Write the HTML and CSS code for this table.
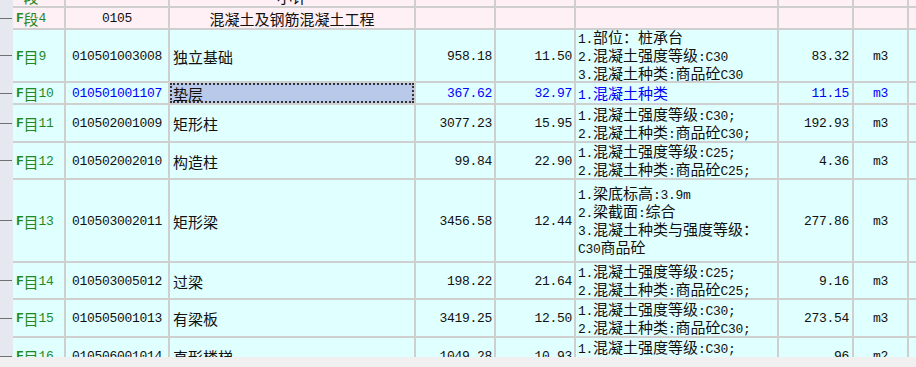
FILE: index.html
```html
<!DOCTYPE html>
<html lang="zh">
<head>
<meta charset="utf-8">
<title>清单</title>
<link rel="stylesheet" href="styles.css">
</head>
<body>
<div class="view">
  <div class="tree">
    <div class="t22"></div>
    <div class="t22"></div>
    <div class="t53"></div>
    <div class="t22"></div>
    <div class="t38"></div>
    <div class="t37"></div>
    <div class="t83"></div>
    <div class="t37"></div>
    <div class="t38"></div>
    <div class="t38"></div>
  </div>
  <div class="grid">
    <div class="row pink">
      <div class="c lbl"><span class="a f">F</span>段<span class="a">3</span></div>
      <div class="c code a"></div>
      <div class="c name center">小计</div>
      <div class="c num a">35523.55</div>
      <div class="c num a"></div>
      <div class="c desc"></div>
      <div class="c qty a"></div>
      <div class="c unit a"></div>
      <div class="c"></div>
    </div>
    <div class="row pink">
      <div class="c lbl"><span class="a f">F</span>段<span class="a">4</span></div>
      <div class="c code a">0105</div>
      <div class="c name center">混凝土及钢筋混凝土工程</div>
      <div class="c num a"></div>
      <div class="c num a"></div>
      <div class="c desc"></div>
      <div class="c qty a"></div>
      <div class="c unit a"></div>
      <div class="c"></div>
    </div>
    <div class="row cyan">
      <div class="c lbl"><span class="a f">F</span>目<span class="a">9</span></div>
      <div class="c code a">010501003008</div>
      <div class="c name">独立基础</div>
      <div class="c num a">958.18</div>
      <div class="c num a">11.50</div>
      <div class="c desc"><div><span class="a">1.</span>部位：桩承台<br><span class="a">2.</span>混凝土强度等级<span class="a">:C30</span><br><span class="a">3.</span>混凝土种类<span class="a">:</span>商品砼<span class="a">C30</span></div></div>
      <div class="c qty a">83.32</div>
      <div class="c unit a">m3</div>
      <div class="c"></div>
    </div>
    <div class="row cyan sel">
      <div class="c lbl"><span class="a f">F</span>目<span class="a">10</span></div>
      <div class="c code a">010501001107</div>
      <div class="c name focus">垫层</div>
      <div class="c num a">367.62</div>
      <div class="c num a">32.97</div>
      <div class="c desc"><div><span class="a">1.</span>混凝土种类</div></div>
      <div class="c qty a">11.15</div>
      <div class="c unit a">m3</div>
      <div class="c"></div>
    </div>
    <div class="row cyan">
      <div class="c lbl"><span class="a f">F</span>目<span class="a">11</span></div>
      <div class="c code a">010502001009</div>
      <div class="c name">矩形柱</div>
      <div class="c num a">3077.23</div>
      <div class="c num a">15.95</div>
      <div class="c desc"><div><span class="a">1.</span>混凝土强度等级<span class="a">:C30;</span><br><span class="a">2.</span>混凝土种类<span class="a">:</span>商品砼<span class="a">C30;</span></div></div>
      <div class="c qty a">192.93</div>
      <div class="c unit a">m3</div>
      <div class="c"></div>
    </div>
    <div class="row cyan">
      <div class="c lbl"><span class="a f">F</span>目<span class="a">12</span></div>
      <div class="c code a">010502002010</div>
      <div class="c name">构造柱</div>
      <div class="c num a">99.84</div>
      <div class="c num a">22.90</div>
      <div class="c desc"><div><span class="a">1.</span>混凝土强度等级<span class="a">:C25;</span><br><span class="a">2.</span>混凝土种类<span class="a">:</span>商品砼<span class="a">C25;</span></div></div>
      <div class="c qty a">4.36</div>
      <div class="c unit a">m3</div>
      <div class="c"></div>
    </div>
    <div class="row cyan">
      <div class="c lbl"><span class="a f">F</span>目<span class="a">13</span></div>
      <div class="c code a">010503002011</div>
      <div class="c name">矩形梁</div>
      <div class="c num a">3456.58</div>
      <div class="c num a">12.44</div>
      <div class="c desc"><div><span class="a">1.</span>梁底标高<span class="a">:3.9m</span><br><span class="a">2.</span>梁截面<span class="a">:</span>综合<br><span class="a">3.</span>混凝土种类与强度等级：<br><span class="a">C30</span>商品砼</div></div>
      <div class="c qty a">277.86</div>
      <div class="c unit a">m3</div>
      <div class="c"></div>
    </div>
    <div class="row cyan">
      <div class="c lbl"><span class="a f">F</span>目<span class="a">14</span></div>
      <div class="c code a">010503005012</div>
      <div class="c name">过梁</div>
      <div class="c num a">198.22</div>
      <div class="c num a">21.64</div>
      <div class="c desc"><div><span class="a">1.</span>混凝土强度等级<span class="a">:C25;</span><br><span class="a">2.</span>混凝土种类<span class="a">:</span>商品砼<span class="a">C25;</span></div></div>
      <div class="c qty a">9.16</div>
      <div class="c unit a">m3</div>
      <div class="c"></div>
    </div>
    <div class="row cyan">
      <div class="c lbl"><span class="a f">F</span>目<span class="a">15</span></div>
      <div class="c code a">010505001013</div>
      <div class="c name">有梁板</div>
      <div class="c num a">3419.25</div>
      <div class="c num a">12.50</div>
      <div class="c desc"><div><span class="a">1.</span>混凝土强度等级<span class="a">:C30;</span><br><span class="a">2.</span>混凝土种类<span class="a">:</span>商品砼<span class="a">C30;</span></div></div>
      <div class="c qty a">273.54</div>
      <div class="c unit a">m3</div>
      <div class="c"></div>
    </div>
    <div class="row cyan">
      <div class="c lbl"><span class="a f">F</span>目<span class="a">16</span></div>
      <div class="c code a">010506001014</div>
      <div class="c name">直形楼梯</div>
      <div class="c num a">1049.28</div>
      <div class="c num a">10.93</div>
      <div class="c desc"><div><span class="a">1.</span>混凝土强度等级<span class="a">:C30;</span><br><span class="a">2.</span>混凝土种类<span class="a">:</span>商品砼<span class="a">C30;</span></div></div>
      <div class="c qty a">96</div>
      <div class="c unit a">m2</div>
      <div class="c"></div>
    </div>
  </div>
</div>
<div class="hscroll"></div>
</body>
</html>
```

FILE: styles.css
```css
* { box-sizing: border-box; margin: 0; padding: 0; }
html, body { width: 916px; height: 367px; overflow: hidden; }
body {
  background: #f0f0f0;
  font-family: "Noto Sans CJK SC", sans-serif;
  font-size: 15px;
  color: #111;
  display: flex;
  flex-direction: column;
}
.view { height: 357px; flex: none; overflow: hidden; display: flex; align-items: flex-start; }
.tree {
  width: 13px;
  flex: none;
  background: #e6e8ef;
  display: flex;
  flex-direction: column;
  margin-top: -14px;
  height: 371px;
}
.tree > div { display: flex; align-items: center; padding-bottom: 2px; flex: none; }
.tree > div::before { content: ""; width: 12px; height: 1px; background: #707070; }
.t22 { height: 22px; }
.t37 { height: 37px; }
.t38 { height: 38px; }
.t53 { height: 53px; }
.t83 { height: 83px; }

.grid {
  flex: 1;
  margin-top: -14px;
  display: grid;
  grid-template-columns: 51px 102px 244px 78px 78px 201px 73px 53px 1fr;
  grid-template-rows: 20px 20px 51px 20px 36px 35px 81px 35px 36px 36px;
  gap: 2px;
  background: #cfcfcf;
}
.row { display: contents; }
.pink > div { background: #fff0f5; }
.cyan > div { background: #e0ffff; }
.c {
  display: flex;
  align-items: center;
  overflow: hidden;
  white-space: nowrap;
  line-height: 15px;
  padding-top: 1px;
}
.a {
  font-family: "Liberation Mono", monospace;
  font-size: 13px;
  letter-spacing: -0.3px;
}
.f { font-weight: bold; }
.lbl { padding-left: 3px; color: #1f8a1f; }
.code { justify-content: center; }
.name { padding-left: 3px; }
.center { justify-content: center; padding-left: 0; }
.num { justify-content: flex-end; padding-right: 2px; }
.desc { padding-left: 2px; }
.qty { justify-content: flex-end; padding-right: 3px; }
.unit { justify-content: center; }

.sel .code, .sel .num, .sel .desc, .sel .qty, .sel .unit { color: #0000ff; }
.cyan > .focus {
  background: #b8c9e9;
  outline: 2px dotted #333;
  outline-offset: -2px;
}
.hscroll { height: 10px; background: #f0f0f0; flex: none; }
```
